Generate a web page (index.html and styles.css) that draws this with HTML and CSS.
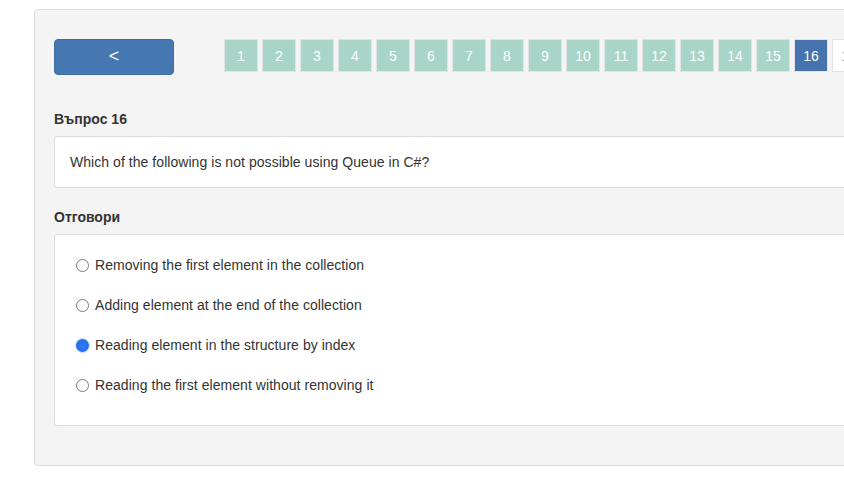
FILE: index.html
```html
<!DOCTYPE html>
<html>
<head>
<meta charset="utf-8">
<link rel="stylesheet" href="styles.css">
</head>
<body>
<div class="panel">
  <div class="nav">
    <button class="back">&lt;</button>
    <div class="pages">
      <span class="pg done">1</span>
      <span class="pg done">2</span>
      <span class="pg done">3</span>
      <span class="pg done">4</span>
      <span class="pg done">5</span>
      <span class="pg done">6</span>
      <span class="pg done">7</span>
      <span class="pg done">8</span>
      <span class="pg done">9</span>
      <span class="pg done">10</span>
      <span class="pg done">11</span>
      <span class="pg done">12</span>
      <span class="pg done">13</span>
      <span class="pg done">14</span>
      <span class="pg done">15</span>
      <span class="pg current">16</span>
      <span class="pg">17</span>
    </div>
  </div>
  <h4 class="label q-label">Въпрос 16</h4>
  <div class="box question">Which of the following is not possible using Queue in C#?</div>
  <h4 class="label a-label">Отговори</h4>
  <div class="box answers">
    <label class="opt"><span class="radio"></span>Removing the first element in the collection</label>
    <label class="opt"><span class="radio"></span>Adding element at the end of the collection</label>
    <label class="opt"><span class="radio checked"></span>Reading element in the structure by index</label>
    <label class="opt"><span class="radio"></span>Reading the first element without removing it</label>
  </div>
</div>
</body>
</html>
```
FILE: styles.css
```css
html, body {
  margin: 0;
  overflow: hidden;
  background: #ffffff;
}
body {
  padding: 9px 0 0 34px;
  font-family: "Liberation Sans", Arial, Helvetica, sans-serif;
  font-size: 14px;
  color: #333333;
}
.panel {
  width: 1060px;
  background: #f4f4f4;
  border: 1px solid #dddddd;
  border-radius: 4px;
  padding: 29px 19px 39px 19px;
}
.nav {
  display: flex;
  align-items: flex-start;
  height: 36px;
}
.back {
  width: 120px;
  height: 36px;
  background: #4577b0;
  border: 1px solid #3f6ea6;
  border-radius: 4px;
  color: #ffffff;
  font-family: "Liberation Sans", Arial, sans-serif;
  font-size: 18px;
  line-height: 1;
  padding: 0 0 2px 0;
  cursor: pointer;
}
.pages {
  display: flex;
  gap: 4px;
  margin-left: 50px;
}
.pg {
  box-sizing: border-box;
  width: 34px;
  height: 33px;
  border: 1px solid #e3e3e3;
  background: #ffffff;
  color: #aaaaaa;
  display: flex;
  align-items: center;
  justify-content: center;
  font-size: 14px;
}
.pg.done {
  background: #a8d5c7;
  color: #ffffff;
}
.pg.current {
  background: #4473ae;
  color: #ffffff;
}
.label {
  font-size: 14px;
  font-weight: bold;
  line-height: 20px;
}
.q-label {
  margin: 34px 0 7px 0;
}
.a-label {
  margin: 0 0 7px 0;
}
.box {
  background: #ffffff;
  border: 1px solid #dddddd;
  border-radius: 3px;
  letter-spacing: 0.05px;
}
.question {
  padding: 15px 15px;
  line-height: 20px;
  margin-bottom: 19px;
}
.answers {
  padding: 20px 21px 10px 21px;
}
.opt {
  display: flex;
  align-items: center;
  height: 20px;
  line-height: 20px;
  margin-bottom: 20px;
}
.radio {
  box-sizing: border-box;
  width: 13px;
  height: 13px;
  border-radius: 50%;
  border: 1px solid #7a7a7a;
  background: #ffffff;
  margin-right: 6px;
  flex: none;
}
.radio.checked {
  border: none;
  background: radial-gradient(circle, #2f7cf0 0, #1c67e6 100%);
  box-shadow: 0 0 0 1px rgba(28, 103, 230, 0.25);
}
```
